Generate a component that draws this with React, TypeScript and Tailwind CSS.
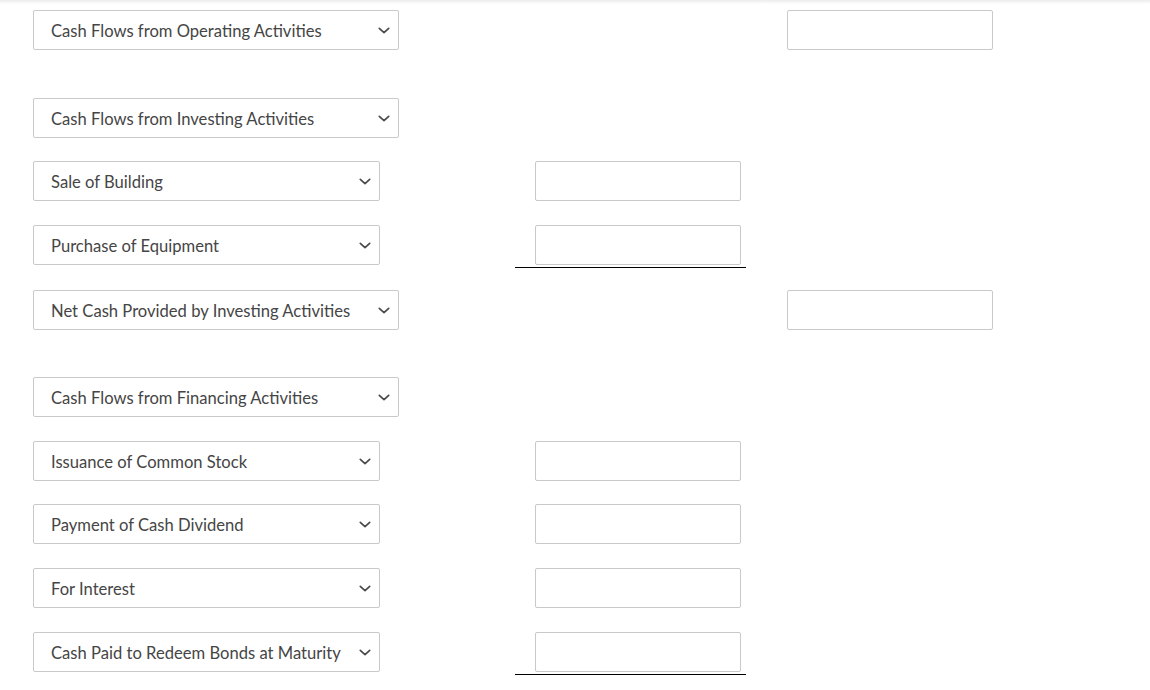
import React from 'react';

type Row = {
  label: string;
  wide?: boolean;
  mid?: boolean;
  right?: boolean;
  underline?: boolean;
  mt: string;
};

const rows: Row[] = [
  { label: 'Cash Flows from Operating Activities', wide: true, right: true, mt: 'mt-0' },
  { label: 'Cash Flows from Investing Activities', wide: true, mt: 'mt-[48px]' },
  { label: 'Sale of Building', mid: true, mt: 'mt-[23px]' },
  { label: 'Purchase of Equipment', mid: true, underline: true, mt: 'mt-[24px]' },
  { label: 'Net Cash Provided by Investing Activities', wide: true, right: true, mt: 'mt-[25px]' },
  { label: 'Cash Flows from Financing Activities', wide: true, mt: 'mt-[47px]' },
  { label: 'Issuance of Common Stock', mid: true, mt: 'mt-[24px]' },
  { label: 'Payment of Cash Dividend', mid: true, mt: 'mt-[23px]' },
  { label: 'For Interest', mid: true, mt: 'mt-[24px]' },
  { label: 'Cash Paid to Redeem Bonds at Maturity', mid: true, underline: true, mt: 'mt-[24px]' },
];

const Chevron = () => (
  <svg width="12" height="7" viewBox="0 0 12 7" className="shrink-0">
    <polyline points="1.3,1.3 6,5.6 10.7,1.3" fill="none" stroke="#4a4a4a" strokeWidth="1.7" strokeLinecap="round" strokeLinejoin="round" />
  </svg>
);

const Select = ({ label, wide }: { label: string; wide?: boolean }) => (
  <div
    className={`h-10 flex items-center justify-between border border-[#c9c9c9] rounded-[2px] bg-white pl-[17px] pr-[8px] ${
      wide ? 'w-[366px]' : 'w-[347px]'
    }`}
  >
    <span className="pt-[2px] text-[16.6px] text-[#454545]">{label}</span>
    <Chevron />
  </div>
);

const Box = () => <div className="h-10 w-[206px] border border-[#c9c9c9] rounded-[2px] bg-white" />;

export default function App() {
  return (
    <div className="relative min-h-screen bg-white" style={{ fontFamily: 'Lato, "Open Sans", sans-serif' }}>
      <div className="h-[4px] bg-gradient-to-b from-[#ececec] to-white" />
      <div className="pt-[6px] pl-[33px] flex flex-col">
        {rows.map((r, i) => (
          <div key={i} className={`flex ${r.mt}`}>
            <div className="w-[482px] shrink-0">
              <Select label={r.label} wide={r.wide} />
            </div>
            <div className="w-[231px] shrink-0">
              {r.mid && (
                <div className="relative pl-[20px]">
                  <Box />
                  {r.underline && <div className="absolute left-0 right-0 -bottom-[3px] h-px bg-black" />}
                </div>
              )}
            </div>
            <div className="w-[41px] shrink-0" />
            <div className="w-[206px] shrink-0">{r.right && <Box />}</div>
          </div>
        ))}
      </div>
    </div>
  );
}
